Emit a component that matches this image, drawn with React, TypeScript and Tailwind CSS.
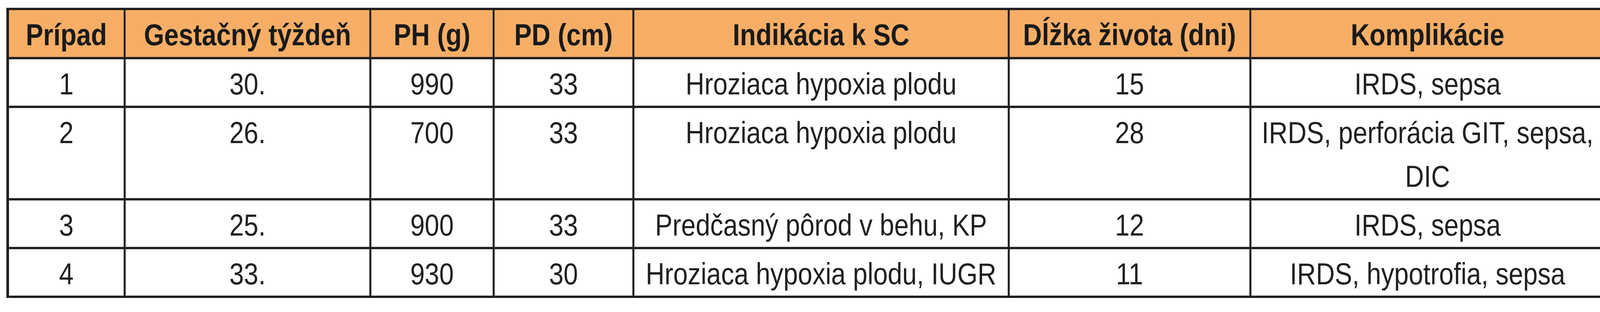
import React, { useEffect, useState } from 'react';

const headers = [
  'Prípad',
  'Gestačný týždeň',
  'PH (g)',
  'PD (cm)',
  'Indikácia k SC',
  'Dĺžka života (dni)',
  'Komplikácie',
];

const rows: React.ReactNode[][] = [
  ['1', '30.', '990', '33', 'Hroziaca hypoxia plodu', '15', 'IRDS, sepsa'],
  [
    '2',
    '26.',
    '700',
    '33',
    'Hroziaca hypoxia plodu',
    '28',
    <>
      IRDS, perforácia GIT, sepsa,
      <br />
      DIC
    </>,
  ],
  ['3', '25.', '900', '33', 'Predčasný pôrod v behu, KP', '12', 'IRDS, sepsa'],
  ['4', '33.', '930', '30', 'Hroziaca hypoxia plodu, IUGR', '11', 'IRDS, hypotrofia, sepsa'],
];

// the sheet is drawn at 4787px; squeeze it to whatever the window really is
const DESIGN_WIDTH = 4787;

export default function App() {
  const [scale, setScale] = useState(() => window.innerWidth / DESIGN_WIDTH);

  useEffect(() => {
    const onResize = () => setScale(window.innerWidth / DESIGN_WIDTH);
    window.addEventListener('resize', onResize);
    return () => window.removeEventListener('resize', onResize);
  }, []);

  return (
    <div className="w-screen h-[800px] overflow-hidden bg-white">
      <div
        className="w-[4787px] h-[800px] overflow-hidden origin-top-left pl-[19px] pt-[20px] font-['Liberation_Sans',Arial,sans-serif]"
        style={{ transform: `scaleX(${scale})` }}
      >
        <div className="grid w-max grid-cols-[349px_735px_369px_418px_1123px_723px_1060px] border-t-[6px] border-l-[8px] border-[#231f20]">
          {headers.map((h) => (
            <div
              key={h}
              className="border-r-[6px] border-b-[6px] border-[#231f20] bg-[#f6ae66] pt-[7px] text-center text-[78px] leading-[113px] font-bold text-[#1a1a1a] whitespace-nowrap"
            >
              {h}
            </div>
          ))}
          {rows.map((row, i) =>
            row.map((cell, j) => (
              <div
                key={`${i}-${j}`}
                className="border-r-[6px] border-b-[6px] border-[#231f20] px-2 pt-[7px] text-center text-[78px] leading-[112px] text-[#231f20] whitespace-nowrap"
              >
                {cell}
              </div>
            ))
          )}
        </div>
      </div>
    </div>
  );
}
